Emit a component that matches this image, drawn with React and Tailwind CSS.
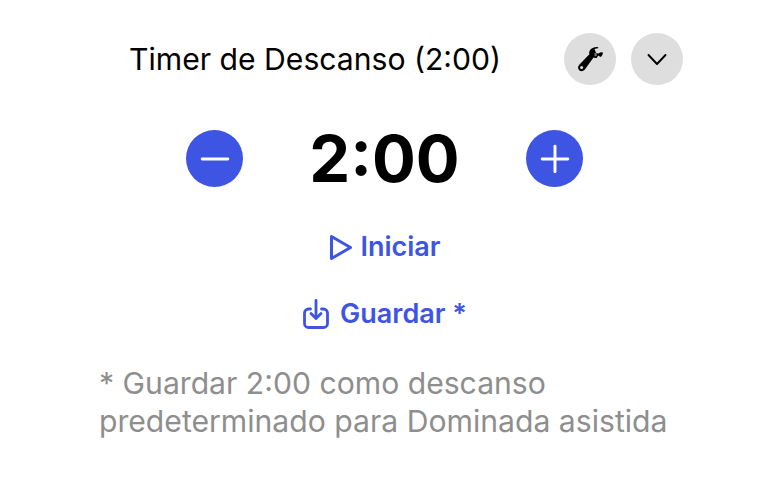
import { Minus, Plus } from 'lucide-react';

function WrenchIcon() {
  return (
    <svg width="28" height="28" viewBox="0 0 28 28" fill="#000">
      <path fillRule="evenodd" d="M27 7.5c-.2 2-1 3.4-2.4 4.6l-2.4-1.6-1.3 2.3c-1.3.4-2.4.3-3.4-.2L8.7 24.8c-1.6 1.7-4 1.8-5.5.4-1.5-1.5-1.5-3.8.1-5.5l8.6-8.9 1.5-1.5c-.5-1.8-.1-3.4 1.1-4.8C16 3 18 2 20.6 2c1 0 1.6.5 2.2 1.1l-4.3.8 1.6 4.2 2.4.3 2.1-1.2z" />
      <circle cx="5.6" cy="22.6" r="1.5" fill="#dedede" />
      <rect x="18.5" y="8" width="2.2" height="3.2" fill="#777" />
    </svg>
  );
}

function SaveIcon() {
  return (
    <svg width="26" height="30" viewBox="0 0 26 30" fill="none" stroke="currentColor" strokeWidth="2.8" strokeLinecap="round" strokeLinejoin="round">
      <path d="M7.5 10H5.5a4 4 0 0 0-4 4v10.5a4 4 0 0 0 4 4h15a4 4 0 0 0 4-4V14a4 4 0 0 0-4-4h-2" />
      <path d="M13 1.5v17.5" />
      <path d="M8 14.5l5 5 5-5" />
    </svg>
  );
}

function PlayIcon() {
  return (
    <svg width="24" height="27" viewBox="0 0 24 27" fill="none" stroke="currentColor" strokeWidth="3" strokeLinejoin="round">
      <path d="M2.5 2.5v22L21.5 13.5z" />
    </svg>
  );
}

function ChevronIcon() {
  return (
    <svg width="20" height="13" viewBox="0 0 20 13" fill="none" stroke="#000" strokeWidth="1.9" strokeLinecap="round" strokeLinejoin="round">
      <path d="M1.5 2l8.5 9 8.5-9" />
    </svg>
  );
}

export default function App() {
  return (
    <div className="w-[768px] h-[479px] overflow-hidden bg-white flex flex-col font-['Inter',sans-serif]">
      {/* Header */}
      <div className="flex items-center pt-[33px] pl-[129px]">
        <h1 className="w-[435px] text-[30.15px] leading-[52px] text-black whitespace-nowrap">Timer de Descanso (2:00)</h1>
        <button className="w-[52px] h-[52px] rounded-full bg-[#dedede] flex items-center justify-center">
          <WrenchIcon />
        </button>
        <button className="ml-[15px] w-[52px] h-[52px] rounded-full bg-[#dedede] flex items-center justify-center">
          <ChevronIcon />
        </button>
      </div>

      {/* Stepper */}
      <div className="flex items-center justify-between mt-[45px] ml-[186px] w-[397px]">
        <button className="w-[57px] h-[57px] rounded-full bg-[#3e54e2] flex items-center justify-center">
          <Minus size={44} strokeWidth={1.6} className="text-white" />
        </button>
        <span className="text-[65px] leading-[57px] font-bold text-black">2:00</span>
        <button className="w-[57px] h-[57px] rounded-full bg-[#3e54e2] flex items-center justify-center">
          <Plus size={44} strokeWidth={1.6} className="text-white" />
        </button>
      </div>

      {/* Actions */}
      <button className="mt-[42px] ml-[2px] flex items-center justify-center gap-[7px] text-[#3e54e2] text-[27px] leading-[36px] font-semibold">
        <PlayIcon />
        Iniciar
      </button>
      <button className="mt-[31px] ml-[2px] flex items-center justify-center gap-[11px] text-[#3e54e2] text-[27px] leading-[36px] font-semibold">
        <SaveIcon />
        Guardar *
      </button>

      {/* Footnote */}
      <p className="mt-[32px] pl-[99px] text-[30.15px] leading-[38px] text-[#8e8e8e] whitespace-nowrap">
        * Guardar 2:00 como descanso
        <br />
        predeterminado para Dominada asistida
      </p>
    </div>
  );
}
